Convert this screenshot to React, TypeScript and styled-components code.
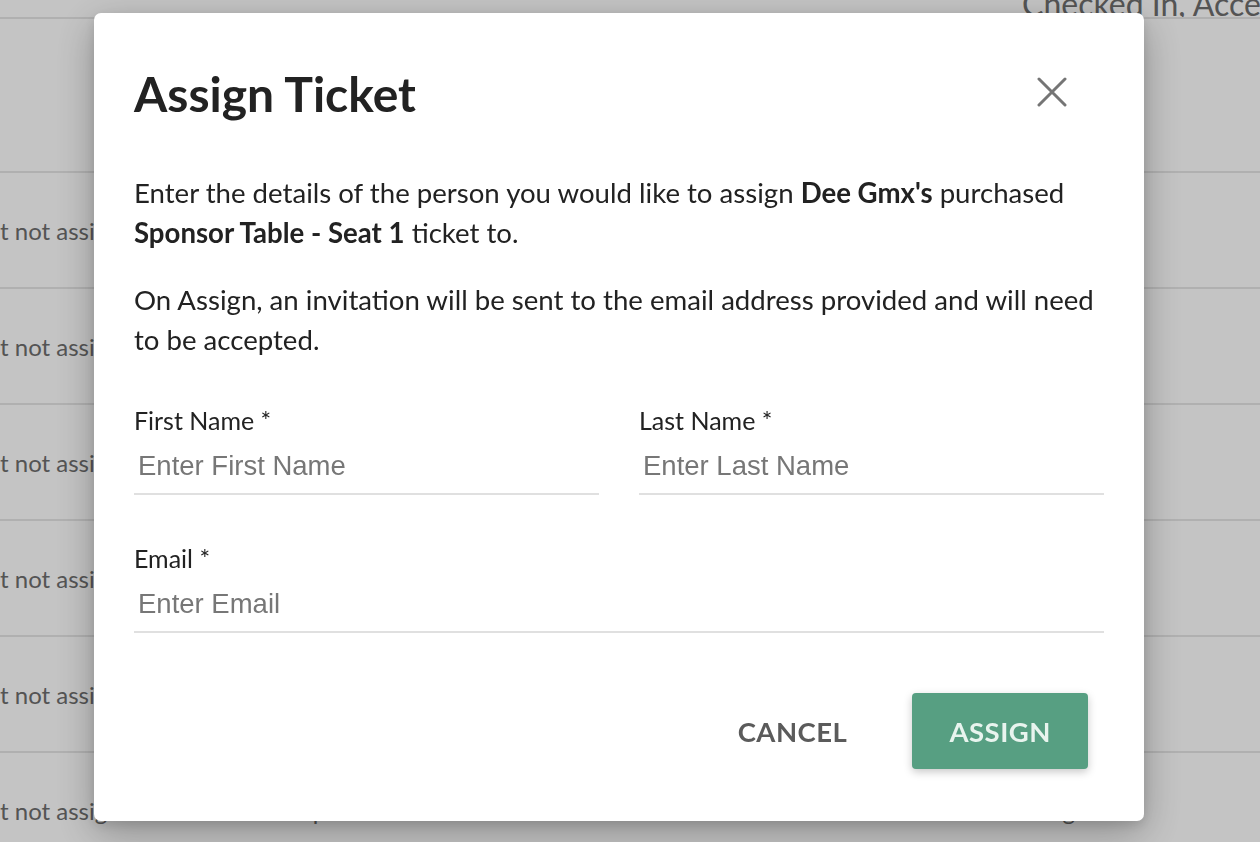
import React from "react";
import styled, { createGlobalStyle } from "styled-components";

const GlobalStyle = createGlobalStyle`
  html, body {
    margin: 0;
    padding: 0;
    width: 1260px;
    height: 842px;
    overflow: hidden;
    background: #ffffff;
    font-family: Lato, "Noto Sans", sans-serif;
  }

  * {
    box-sizing: border-box;
  }
`;

const Page = styled.div`
  width: 1260px;
  height: 842px;
  overflow: hidden;
  background: #ffffff;
`;

const HeaderRow = styled.div`
  height: 19px;
  border-bottom: 2px solid #e6e6e6;
  display: flex;
  justify-content: flex-end;
  overflow: hidden;
`;

const HeaderText = styled.span`
  margin-top: -12px;
  width: 238px;
  font-size: 32px;
  line-height: 31px;
  color: #6e6e6e;
  white-space: nowrap;
`;

const Spacer = styled.div`
  height: 154px;
  border-bottom: 2px solid #e6e6e6;
`;

const Row = styled.div`
  height: 116px;
  border-bottom: 2px solid #e6e6e6;
  display: grid;
  grid-template-columns: 300px 680px 1fr;
  align-items: center;
  font-size: 24px;
  color: #6e6e6e;
  white-space: nowrap;
`;

const Cell = styled.span<{ $indent?: number }>`
  overflow: hidden;
  padding-left: ${(p) => p.$indent ?? 0}px;
`;

const Backdrop = styled.div`
  position: fixed;
  inset: 0;
  background: rgba(0, 0, 0, 0.23);
  display: flex;
  align-items: flex-start;
  padding: 13px 0 0 94px;
`;

const Modal = styled.div`
  width: 1050px;
  height: 808px;
  background: #ffffff;
  border-radius: 7px;
  box-shadow:
    0 12px 40px rgba(0, 0, 0, 0.28),
    0 4px 12px rgba(0, 0, 0, 0.12);
  display: flex;
  flex-direction: column;
`;

const ModalHeader = styled.div`
  padding: 55px 72px 0 40px;
  display: flex;
  align-items: center;
  justify-content: space-between;
`;

const Title = styled.h2`
  margin: 0;
  font-size: 48px;
  line-height: 52px;
  font-weight: 700;
  color: #222222;
`;

const CloseButton = styled.button`
  width: 40px;
  height: 40px;
  margin-top: -4px;
  padding: 0;
  border: none;
  background: none;
  display: flex;
  align-items: center;
  justify-content: center;
  cursor: pointer;
`;

const Body = styled.div`
  padding: 53px 40px 0 40px;
`;

const Text = styled.p`
  margin: 0 0 27px;
  font-size: 27.6px;
  line-height: 40px;
  color: #222222;

  b {
    font-weight: 700;
  }
`;

const Form = styled.div`
  margin-top: 45px;
  display: flex;
  flex-direction: column;
  gap: 48px;
`;

const FieldRow = styled.div`
  display: grid;
  grid-template-columns: 1fr 1fr;
  gap: 40px;
`;

const Field = styled.label`
  display: flex;
  flex-direction: column;
`;

const Label = styled.span`
  font-size: 25px;
  line-height: 30px;
  color: #222222;
`;

const Input = styled.input`
  height: 58px;
  margin-top: 2px;
  padding: 2px 4px 0;
  border: none;
  border-bottom: 2px solid #e0e0e0;
  outline: none;
  background: transparent;
  font-family: "Liberation Sans", Arial, sans-serif;
  font-size: 27.5px;
  color: #222222;

  &::placeholder {
    color: #777777;
  }
`;

const Footer = styled.div`
  margin-top: 60px;
  padding: 0 56px 0 40px;
  display: flex;
  justify-content: flex-end;
  align-items: center;
  gap: 28px;
`;

const Button = styled.button<{ $primary?: boolean }>`
  height: 76px;
  padding: 0 37px;
  border: none;
  border-radius: 4px;
  font-family: Lato, "Noto Sans", sans-serif;
  font-size: 27.5px;
  font-weight: 700;
  letter-spacing: 0.5px;
  cursor: pointer;
  background: ${(p) => (p.$primary ? "#579f82" : "transparent")};
  color: ${(p) => (p.$primary ? "#e8f4ee" : "#5b5b5b")};
  box-shadow: ${(p) =>
    p.$primary ? "0 3px 8px rgba(0, 0, 0, 0.22)" : "none"};
`;

const rows = [
  { a: "t not assigned", b: "", c: "" },
  { a: "t not assigned", b: "", c: "" },
  { a: "t not assigned", b: "", c: "" },
  { a: "t not assigned", b: "", c: "" },
  { a: "t not assigned", b: "", c: "" },
  { a: "t not assigned", b: "Sponsor", c: "Pending" },
];

function CloseIcon() {
  return (
    <svg width="30" height="30" viewBox="0 0 30 30">
      <path
        d="M2 2 L28 28 M28 2 L2 28"
        stroke="#757575"
        strokeWidth="3"
        strokeLinecap="round"
      />
    </svg>
  );
}

export default function App() {
  return (
    <>
      <GlobalStyle />
      <Page>
        <HeaderRow>
          <HeaderText>Checked In, Accepted</HeaderText>
        </HeaderRow>
        <Spacer />
        {rows.map((row, i) => (
          <Row key={i}>
            <Cell>{row.a}</Cell>
            <Cell>{row.b}</Cell>
            <Cell $indent={10}>{row.c}</Cell>
          </Row>
        ))}
      </Page>
      <Backdrop>
        <Modal>
          <ModalHeader>
            <Title>Assign Ticket</Title>
            <CloseButton aria-label="Close">
              <CloseIcon />
            </CloseButton>
          </ModalHeader>
          <Body>
            <Text>
              Enter the details of the person you would like to assign{" "}
              <b>Dee Gmx's</b> purchased <b>Sponsor Table - Seat 1</b> ticket
              to.
            </Text>
            <Text>
              On Assign, an invitation will be sent to the email address
              provided and will need to be accepted.
            </Text>
            <Form>
              <FieldRow>
                <Field>
                  <Label>First Name *</Label>
                  <Input placeholder="Enter First Name" />
                </Field>
                <Field>
                  <Label>Last Name *</Label>
                  <Input placeholder="Enter Last Name" />
                </Field>
              </FieldRow>
              <Field>
                <Label>Email *</Label>
                <Input placeholder="Enter Email" />
              </Field>
            </Form>
          </Body>
          <Footer>
            <Button>CANCEL</Button>
            <Button $primary>ASSIGN</Button>
          </Footer>
        </Modal>
      </Backdrop>
    </>
  );
}
